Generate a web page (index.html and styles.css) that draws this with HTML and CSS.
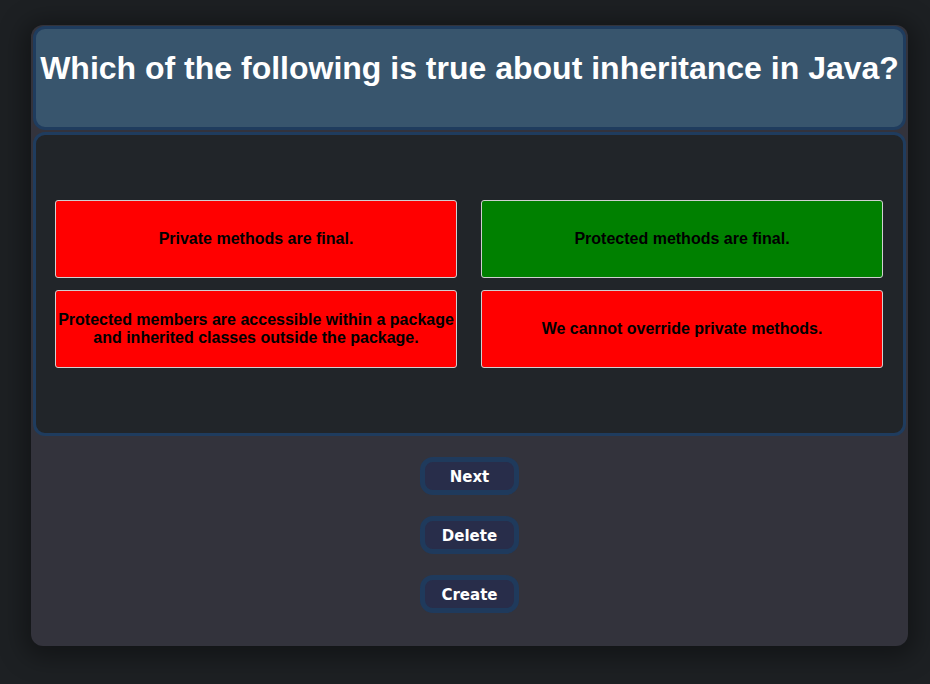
FILE: index.html
```html
<!DOCTYPE html>
<html>
<head>
<meta charset="utf-8">
<link rel="stylesheet" href="styles.css">
</head>
<body>
<div class="quiz">
  <div class="question">
    <h1>Which of the following is true about inheritance in Java?</h1>
  </div>
  <div class="answers">
    <div class="answer wrong">Private methods are final.</div>
    <div class="answer right">Protected methods are final.</div>
    <div class="answer wrong">Protected members are accessible within a package and inherited classes outside the package.</div>
    <div class="answer wrong">We cannot override private methods.</div>
  </div>
  <div class="controls">
    <button class="btn">Next</button>
    <button class="btn">Delete</button>
    <button class="btn">Create</button>
  </div>
</div>
</body>
</html>
```

FILE: styles.css
```css
html, body {
  margin: 0;
  padding: 0;
}
body {
  background: #1d2023;
  width: 930px;
  height: 684px;
  overflow: hidden;
  font-family: "Liberation Sans", Arial, sans-serif;
  padding-top: 25px;
  box-sizing: border-box;
}
.quiz {
  width: 877px;
  margin-left: 31px;
  background: #33333c;
  border-radius: 12px;
  box-shadow: 0 4px 24px 8px rgba(0,0,0,0.35);
  padding: 1px 2px 33px;
  box-sizing: border-box;
  height: 621px;
}
.question {
  background: #38556d;
  border: 3px solid #1f3c5e;
  border-radius: 12px;
  height: 104px;
  box-sizing: border-box;
  padding-top: 21px;
}
.question h1 {
  margin: 0;
  color: #fff;
  font-size: 32px;
  font-weight: bold;
  text-align: center;
  white-space: nowrap;
}
.answers {
  margin-top: 2px;
  background: #212529;
  border: 3px solid #1f3c5e;
  border-radius: 12px;
  height: 304px;
  box-sizing: border-box;
  padding: 65px 19px 0;
  display: grid;
  grid-template-columns: 402px 402px;
  grid-template-rows: 78px 78px;
  column-gap: 24px;
  row-gap: 12px;
  align-content: start;
}
.answer {
  border: 1px solid #d0d0d0;
  border-radius: 3px;
  display: flex;
  align-items: center;
  justify-content: center;
  text-align: center;
  font-size: 16px;
  font-weight: bold;
  color: #000;
  line-height: 18px;
  padding: 0 2px;
}
.wrong { background: #ff0000; }
.right { background: #008000; }
.controls {
  display: flex;
  flex-direction: column;
  align-items: center;
  gap: 21px;
  padding-top: 21px;
}
.btn {
  width: 99px;
  height: 38px;
  box-sizing: border-box;
  background: #282d4a;
  border: 5px solid #1f3a5c;
  border-radius: 13px;
  color: #fff;
  font-family: "DejaVu Sans", Verdana, sans-serif;
  font-weight: bold;
  font-size: 15px;
  padding: 2px 0 0;
  margin: 0;
}
```
